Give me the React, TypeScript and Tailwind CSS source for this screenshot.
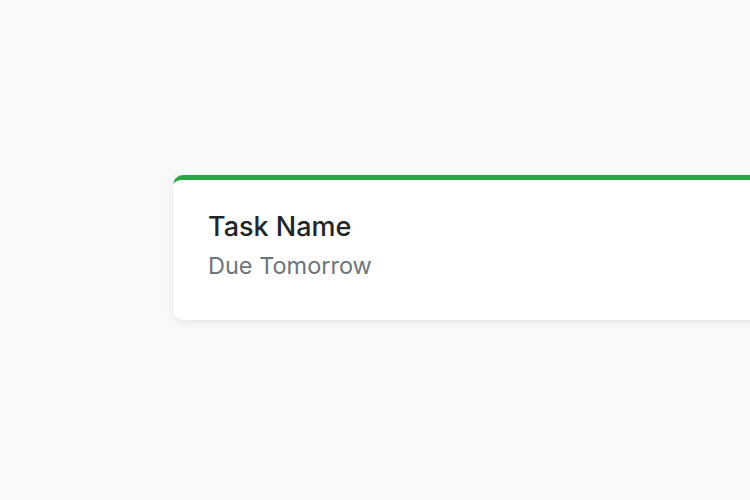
export default function App() {
  return (
    <div className="w-[750px] h-[500px] bg-[#f8f9fa] overflow-hidden" style={{ fontFamily: "Inter, 'Noto Sans', sans-serif" }}>
      <div className="ml-[173px] mt-[175px] w-[640px] bg-white rounded-[10px] border-t-[5px] border-[#28a745] shadow-[0_2px_8px_rgba(0,0,0,0.08)] pl-[35px] pt-[29px] pb-[38px]">
        <h3 className="text-[27px] leading-[36px] text-[#212529] font-[450]">Task Name</h3>
        <p className="mt-[5px] text-[23.5px] leading-[32px] text-[#6c757d]">Due Tomorrow</p>
      </div>
    </div>
  );
}
